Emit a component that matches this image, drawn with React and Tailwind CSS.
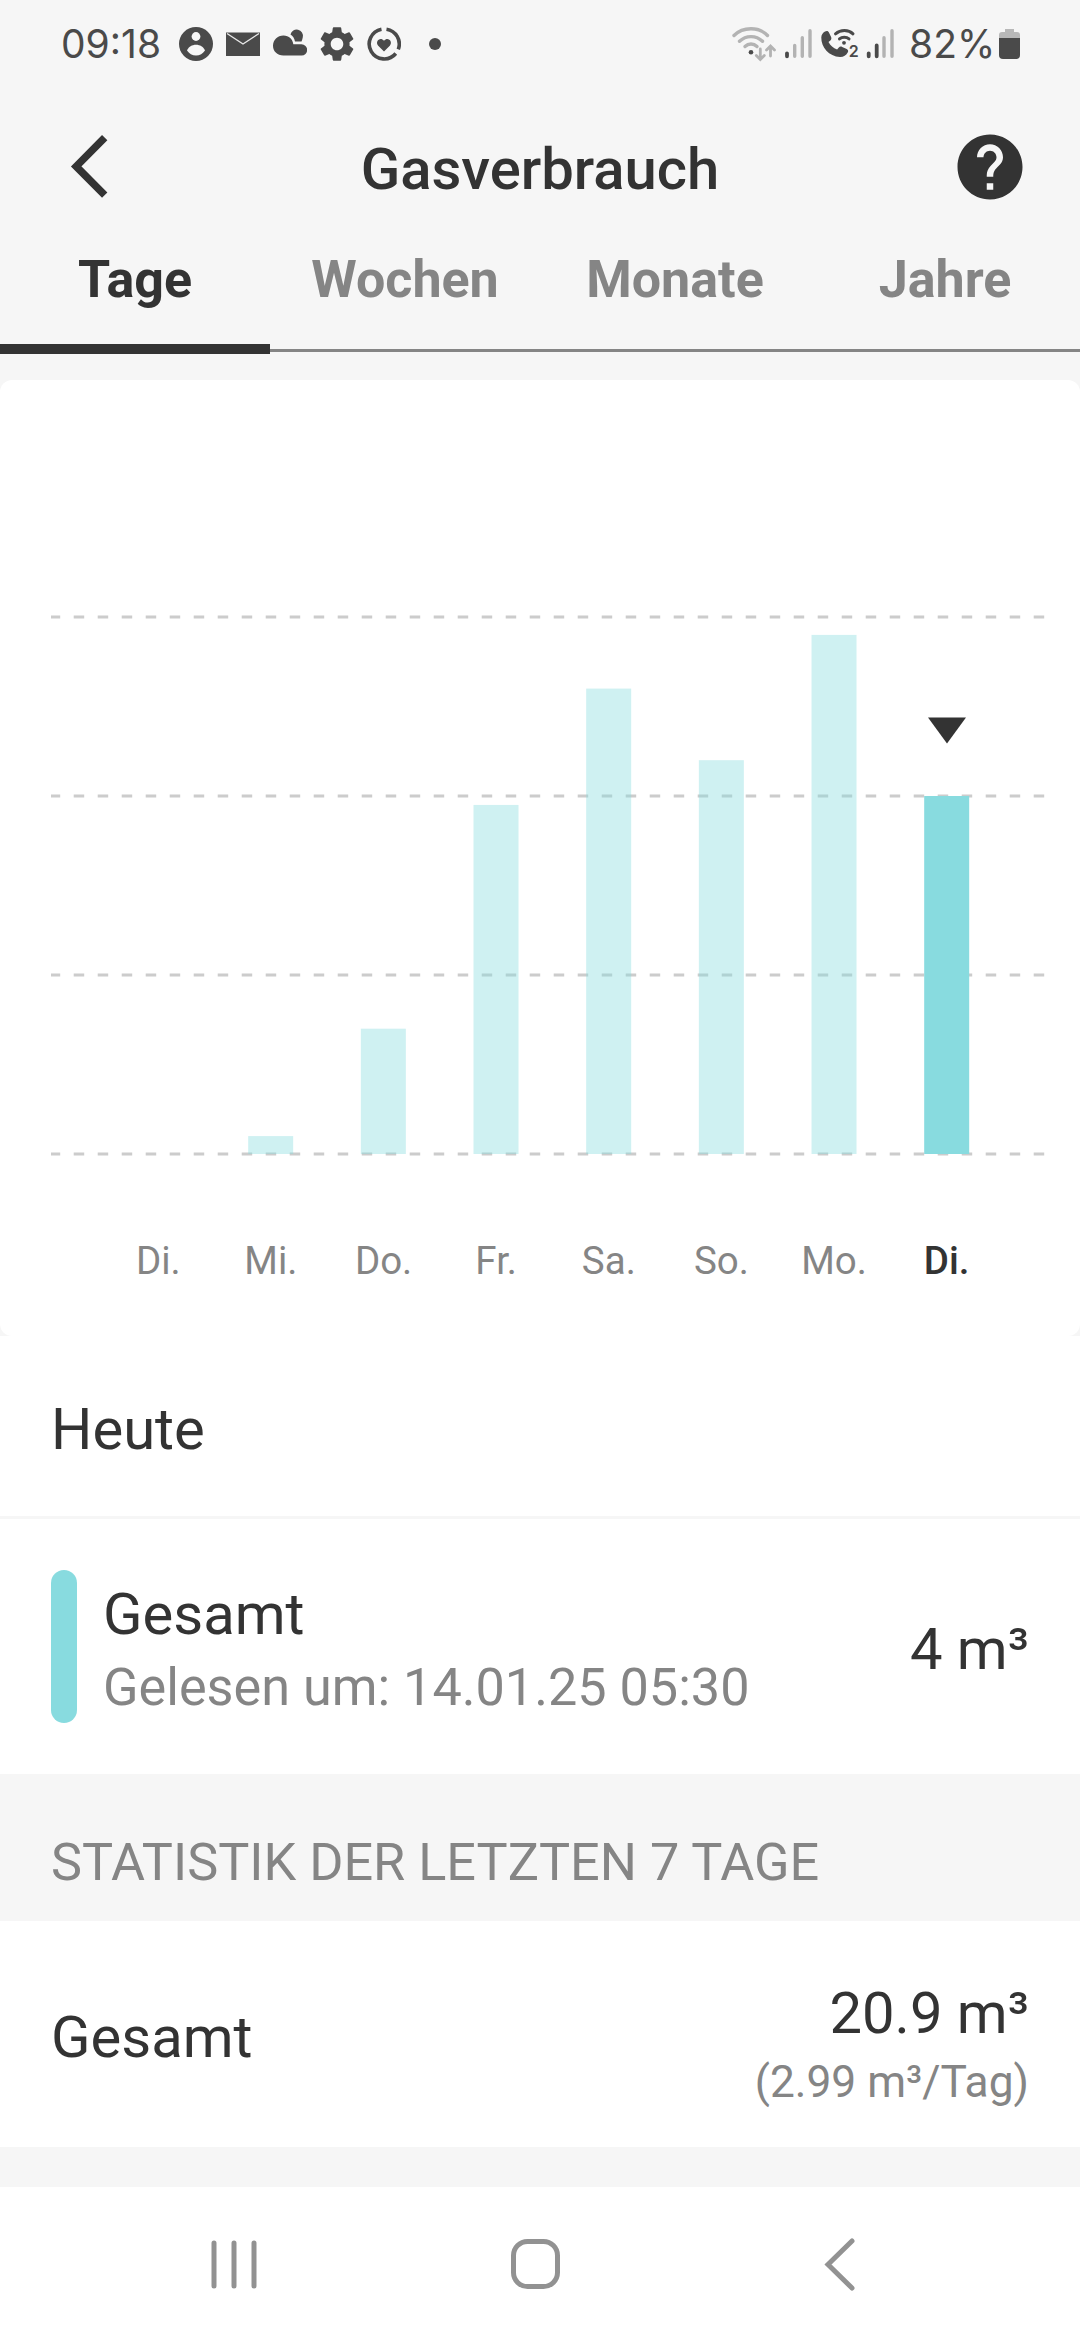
import React, { useState } from "react";
import { MdHelp, MdSettings } from "react-icons/md";

const tabs = ["Tage", "Wochen", "Monate", "Jahre"];

const days = [
  { id: 1, label: "Di.", value: 0 },
  { id: 2, label: "Mi.", value: 0.2 },
  { id: 3, label: "Do.", value: 1.4 },
  { id: 4, label: "Fr.", value: 3.9 },
  { id: 5, label: "Sa.", value: 5.2 },
  { id: 6, label: "So.", value: 4.4 },
  { id: 7, label: "Mo.", value: 5.8 },
  { id: 8, label: "Di.", value: 4 },
];

const StatusBar = () => {
  return (
    <div className="flex h-[90px] items-center justify-between pr-[59px] pb-[3px] pl-[61px] text-[#4a4a4a]">
      <div className="flex items-center">
        <span className="w-[118px] font-['Inter',sans-serif] text-[39px] leading-none font-[370]">09:18</span>
        <div className="flex items-center gap-[13px]">
          <svg className="h-[34px] w-[34px]" viewBox="0 0 34 34">
            <circle cx="17" cy="17" r="17" fill="currentColor" />
            <circle cx="17" cy="9.5" r="4.4" fill="#f6f6f6" />
            <path d="M8 23.5c1.5-3.7 5-5.8 9-5.8s7.5 2.1 9 5.8c-2 3-5.3 5-9 5s-7-2-9-5z" fill="#f6f6f6" />
          </svg>
          <svg className="h-[34px] w-[34px]" viewBox="0 0 34 34">
            <path d="M0 5.5h34v23.5H0z" fill="currentColor" />
            <path d="M1 6.5l16 10.5 16-10.5" fill="none" stroke="#e8e8e8" strokeWidth="1.4" />
          </svg>
          <svg className="h-[34px] w-[34px]" viewBox="0 0 34 34">
            <path d="M17.500 7.500a6.300 6.300 0 1 1 12.300 2.800c-.3 1.4-.7 3.3-1.3 4.200h-6.500c-.6-3.200-2.200-5.500-4.500-7z" fill="currentColor" />
            <path d="M10.500 28.600C4 28.600 0 24 0 18.800 0 13 4.500 8.500 10.500 8.500c5.500 0 9.300 3.700 9.800 8.800h8.200a5.600 5.600 0 0 1 0 11.300z" fill="currentColor" />
          </svg>
          <MdSettings className="-mx-[4px] h-[42px] w-[42px]" />
          <svg className="h-[34px] w-[34px]" viewBox="0 0 34 34">
            <g fill="none" stroke="currentColor" strokeWidth="3.6">
              <path d="M14.5 2.200A15 15 0 1 0 28.800 26.500" />
              <path d="M19.5 2.200A15 15 0 0 1 31.300 22.300" />
            </g>
            <path
              d="M17 24.5l-5.800-5.800c-3.500-3.800 1.700-9.400 5.800-5 4.100-4.400 9.300 1.200 5.800 5z"
              fill="currentColor"
            />
          </svg>
        </div>
        <div className="ml-[28px] h-[12px] w-[12px] rounded-full bg-[#4a4a4a]"></div>
      </div>

      <div className="flex items-center">
        {/* wifi, mobile and call signal */}
        <svg className="h-[40px] w-[178px]" viewBox="0 0 178 40" fill="none" strokeLinecap="round">
          <g stroke="#b3b3b3" strokeWidth="3.4">
            <path d="M3 11.5C12 2.5 28 2.5 36.5 11.5" />
            <path d="M8.5 17.3c6.5-6.3 16.5-6.3 23 0" />
            <path d="M14 22.5c3.5-3.3 8.500-3.3 12 0" />
            <path d="M29.300 25v10m-4-3.500l4 4 4-4M39.500 32V22.500m-4 3.500l4-4 4 4" strokeWidth="2.8" />
            <path d="M63.700 21.500v10.800M71.300 13.700v18.600M79 6.700v25.600M153 13.700v18.600M161 6.700v25.600" />
          </g>
          <path d="M56 29.300v3M137.700 29.300v3M145.700 21.500v10.800" stroke="#4a4a4a" strokeWidth="3.8" />
          <circle cx="20" cy="28.3" r="2.3" fill="#4a4a4a" />
          {/* handset */}
          <path
            d="M94 7.500c1.500-1 3-.8 3.800.8l2.300 4.700c.6 1.500.2 2.800-1 3.700l-1.600 1.300c1.800 3.600 4.800 6.200 8.600 7.500l1.500-1.800c1-1.100 2.200-1.400 3.600-.8l4.500 2c1.500.8 1.900 2.200 1 3.700-1.700 2.900-4.200 4.600-7.700 4.500C98 32.500 90 23 90.300 13.500c.1-2.700 1.500-4.700 3.700-6z"
            fill="#4a4a4a"
          />
          <g stroke="#4a4a4a" strokeWidth="3">
            <path d="M104.500 9.800c5-4.300 13-4.300 17.500 0" />
            <path d="M108.500 14.900c2.500-2.200 7-2.200 9.500 0" />
          </g>
          <circle cx="113" cy="18.8" r="1.9" fill="#4a4a4a" />
          <text x="117.8" y="33.3" fill="#4a4a4a" className="font-['Inter',sans-serif] text-[16px] font-semibold">
            2
          </text>
        </svg>
        <span className="w-[90px] font-['Inter',sans-serif] text-[39px] leading-none font-[370]">82%</span>
        <svg className="h-[30px] w-[22px]" viewBox="0 0 22 30">
          <path d="M6 0h9v3h3q3 0 3 3v4H0V6q0-3 3-3h3z" fill="#b8b8b8" />
          <path d="M0 9h21v17q0 4-4 4H4q-4 0-4-4z" fill="currentColor" />
        </svg>
      </div>
    </div>
  );
};

const Chart = () => {
  // 2 m³ between two grid lines
  const step = 179;
  const base = 774;
  const today = days.length - 1;

  return (
    <div className="h-[956px] rounded-[12px] bg-white">
      <svg className="block h-[858px] w-full" viewBox="0 0 1080 858">
        {[0, 1, 2, 3].map((n) => (
          <line
            key={n}
            x1="51"
            x2="1045"
            y1={base - n * step}
            y2={base - n * step}
            stroke="#cccccc"
            strokeWidth="3"
            strokeDasharray="10.5 13.5"
            strokeDashoffset="1.3"
          />
        ))}
        {days.map((day, i) => {
          const height = (day.value * step) / 2;
          return (
            <rect
              key={day.id}
              x={135.5 + i * 112.67}
              y={base - height}
              width="45"
              height={height}
              fill="#88dbdf"
              fillOpacity={i === today ? 1 : 0.4}
            />
          );
        })}
        <path d="M928 337.5h38l-19 26z" fill="#333333" />
      </svg>
      <div className="mr-[77px] ml-[102px] grid grid-cols-8 text-center text-[38.5px] leading-[46px] text-[#858585]">
        {days.map((day, i) => (
          <div key={day.id} className={i === today ? "font-medium text-[#333333]" : ""}>
            {day.label}
          </div>
        ))}
      </div>
    </div>
  );
};

const App = () => {
  const [active, setActive] = useState("Tage");

  return (
    <div className="flex h-[2340px] w-[1080px] flex-col overflow-hidden bg-[#f6f6f6] font-['Roboto',sans-serif] text-[58px] leading-[68px] text-[#333333]">
      <StatusBar />

      <div className="flex h-[154px] items-center justify-between px-[51px]">
        <button className="w-[78px] pl-[19px]">
          <svg className="h-[66px] w-[38px]" viewBox="0 0 38 66" fill="none" stroke="currentColor" strokeWidth="7.5">
            <path d="M34.7 3.6L6.2 32.4l28.5 28.8" />
          </svg>
        </button>
        <h1 className="pt-[4px] font-medium">Gasverbrauch</h1>
        <MdHelp className="h-[78px] w-[78px]" />
      </div>

      <div className="flex h-[136px]">
        {tabs.map((tab) => (
          <button
            key={tab}
            onClick={() => setActive(tab)}
            className={
              active === tab
                ? "h-[110px] w-[270px] border-b-[10px] border-[#333333] pb-[28px] text-[52px] leading-[60px] font-bold"
                : "h-[108px] w-[270px] border-b-[3px] border-[#858585] pb-[33px] text-[52px] leading-[60px] font-bold text-[#858585]"
            }
          >
            {tab}
          </button>
        ))}
      </div>

      <Chart />

      <div className="flex h-[183px] items-center border-b-[3px] border-[#f6f6f6] bg-white px-[51px] pt-[5px]">Heute</div>

      <div className="flex h-[255px] items-center bg-white px-[51px]">
        <div className="h-[153px] w-[26px] rounded-full bg-[#88dbdf]"></div>
        <div className="ml-[26px] flex-1 pt-[6px]">
          <p>Gesamt</p>
          <p className="mt-[9px] text-[52.2px] leading-[62px] text-[#858585]">Gelesen um: 14.01.25 05:30</p>
        </div>
        <p className="pt-[5px]">4 m³</p>
      </div>

      <div className="h-[147px] px-[51px] pt-[58px] text-[52.2px] leading-[62px] text-[#858585]">
        STATISTIK DER LETZTEN 7 TAGE
      </div>

      <div className="flex h-[226px] items-center justify-between bg-white px-[51px]">
        <p className="pt-[6px]">Gesamt</p>
        <div className="pt-[20px] text-right">
          <p>20.9 m³</p>
          <p className="mt-[8px] text-[44.3px] leading-[54px] text-[#858585]">(2.99 m³/Tag)</p>
        </div>
      </div>

      <div className="h-[40px]"></div>

      <div className="flex flex-1 items-center bg-white pl-[210px] text-[#929292]">
        <svg className="h-[54px] w-[48px]" viewBox="0 0 48 54" stroke="currentColor" strokeWidth="5" strokeLinecap="round">
          <path d="M4 6v43M24 6v43M44 6v43" />
        </svg>
        <svg className="ml-[252px] h-[54px] w-[52px]" viewBox="0 0 52 54" fill="none" stroke="currentColor" strokeWidth="5">
          <rect x="3.5" y="4.5" width="44" height="45" rx="14" />
        </svg>
        <svg className="ml-[262px] h-[54px] w-[32px]" viewBox="0 0 32 54" fill="none" stroke="currentColor" strokeWidth="5" strokeLinecap="round">
          <path d="M28 4L4 27.5 28 51" />
        </svg>
      </div>
    </div>
  );
};

export default App;
